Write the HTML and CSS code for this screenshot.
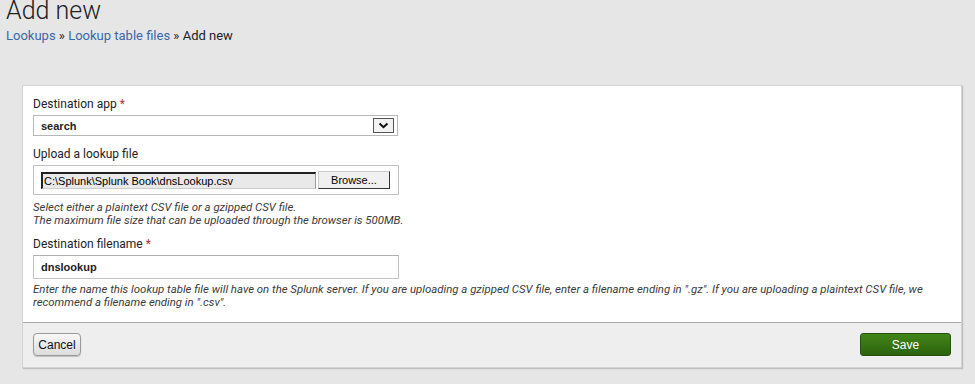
FILE: index.html
```html
<html>
<head>
    <link rel="stylesheet" href="styles.css">
</head>
<body>
    <h1 class="page-title">Add new</h1>
    <div class="breadcrumb">
        <a href="#">Lookups</a> &raquo; <a href="#">Lookup table files</a> &raquo; Add new
    </div>

    <div class="panel">
        <div class="panel-body">
            <label class="field-label">Destination app <span class="req">*</span></label>
            <div class="select-box">
                <span>search</span>
                <span class="select-arrow">
                    <svg width="11" height="7" viewBox="0 0 11 7"><path d="M1.5 1.5 L5.5 5.2 L9.5 1.5" fill="none" stroke="#111" stroke-width="2"/></svg>
                </span>
            </div>

            <label class="field-label">Upload a lookup file</label>
            <div class="file-box">
                <div class="file-path">C:\Splunk\Splunk Book\dnsLookup.csv</div>
                <div class="browse-btn">Browse...</div>
            </div>
            <p class="help">Select either a plaintext CSV file or a gzipped CSV file.<br>The maximum file size that can be uploaded through the browser is 500MB.</p>

            <label class="field-label">Destination filename <span class="req">*</span></label>
            <div class="text-input">dnslookup</div>
            <p class="help help-last">Enter the name this lookup table file will have on the Splunk server. If you are uploading a gzipped CSV file, enter a filename ending in ".gz". If you are uploading a plaintext CSV file, we recommend a filename ending in ".csv".</p>
        </div>
        <div class="panel-footer">
            <button class="btn-cancel">Cancel</button>
            <button class="btn-save">Save</button>
        </div>
    </div>
</body>
</html>
```

FILE: styles.css
```css
    html {
        font-family: Roboto, "Liberation Sans", sans-serif;
        color: #333;
    }
    body {
        background-color: #e6e6e6;
        margin: 0;
        padding: 0 13px 0 22px;
    }

    .page-title {
        font-size: 25px;
        font-weight: 300;
        color: #222;
        margin: -4px 0 0 -16px;
        line-height: 30px;
    }

    .breadcrumb {
        font-size: 13px;
        color: #222;
        margin: 1px 0 0 -16px;
        line-height: 18px;
    }

    .breadcrumb a {
        color: #3a68a8;
        text-decoration: none;
    }

    .panel {
        margin-top: 40px;
        background-color: #fff;
        border: 1px solid #d3d3d3;
        box-shadow: 1px 1px 1px #bdbdbd;
    }

    .panel-body {
        padding: 10px 10px 10px 10px;
        border-bottom: 1px solid #a9a9a9;
    }

    .field-label {
        display: block;
        font-size: 12px;
        color: #222;
        line-height: 16px;
        margin-bottom: 3px;
    }

    .req {
        color: #a33;
    }

    .select-box {
        width: 365px;
        height: 21px;
        border: 1px solid #b8b8b8;
        display: flex;
        align-items: center;
        justify-content: space-between;
        font-family: "Liberation Sans", Arial, sans-serif;
        font-size: 11px;
        font-weight: bold;
        color: #222;
        padding-left: 7px;
        box-sizing: border-box;
        margin-bottom: 10px;
    }

    .select-arrow {
        width: 19px;
        height: 13px;
        border: 1px solid #555;
        margin-right: 3px;
        display: flex;
        align-items: center;
        justify-content: center;
        background: #f2f2f2;
    }

    .file-box {
        width: 366px;
        height: 30px;
        box-sizing: border-box;
        border: 1px solid #c4c4c4;
        display: flex;
        align-items: center;
        padding-left: 7px;
        margin-bottom: 6px;
    }

    .file-path {
        width: 271px;
        height: 14px;
        border-top: 2px solid #222;
        border-left: 2px solid #222;
        border-right: 1px solid #9a9a9a;
        border-bottom: 1px solid #ccc;
        background: #e9e9e9;
        font-family: "Liberation Sans", Arial, sans-serif;
        font-size: 11px;
        color: #000;
        line-height: 14px;
        padding-left: 1px;
    }

    .browse-btn {
        margin-left: 2px;
        width: 70px;
        height: 16px;
        border: 1px solid #333;
        border-top-color: #ccc;
        border-left-color: #ccc;
        background: #f0f0f0;
        font-family: "Liberation Sans", Arial, sans-serif;
        font-size: 11px;
        color: #000;
        text-align: center;
        line-height: 16px;
    }

    .help {
        margin: 0 0 9px 0;
        font-size: 11.4px;
        font-style: italic;
        color: #3a3a3a;
        line-height: 13px;
        padding-right: 20px;
    }

    .help-last {
        margin-bottom: 3px;
    }

    .text-input {
        width: 366px;
        height: 24px;
        box-sizing: border-box;
        border: 1px solid #c4c4c4;
        border-top-color: #b0b0b0;
        padding-left: 7px;
        font-family: "Liberation Sans", Arial, sans-serif;
        font-size: 11px;
        font-weight: bold;
        color: #222;
        line-height: 22px;
        margin-bottom: 4px;
    }

    .panel-footer {
        background-color: #eeeeee;
        padding: 10px 10px 11px 10px;
        display: flex;
        justify-content: space-between;
    }

    .btn-cancel {
        height: 23px;
        width: 48px;
        padding: 0;
        font-family: "Liberation Sans", Arial, sans-serif;
        font-size: 12px;
        color: #111;
        border: 1px solid #9a9a9a;
        border-radius: 4px;
        background: linear-gradient(#f8f8f8, #dcdcdc);
        box-shadow: 0 1px 1px #c0c0c0;
    }

    .btn-save {
        height: 23px;
        width: 91px;
        font-family: "Liberation Sans", Arial, sans-serif;
        font-size: 12px;
        color: #fff;
        border: 1px solid #24520c;
        border-radius: 3px;
        background: linear-gradient(#428618, #2c620e);
    }
```
